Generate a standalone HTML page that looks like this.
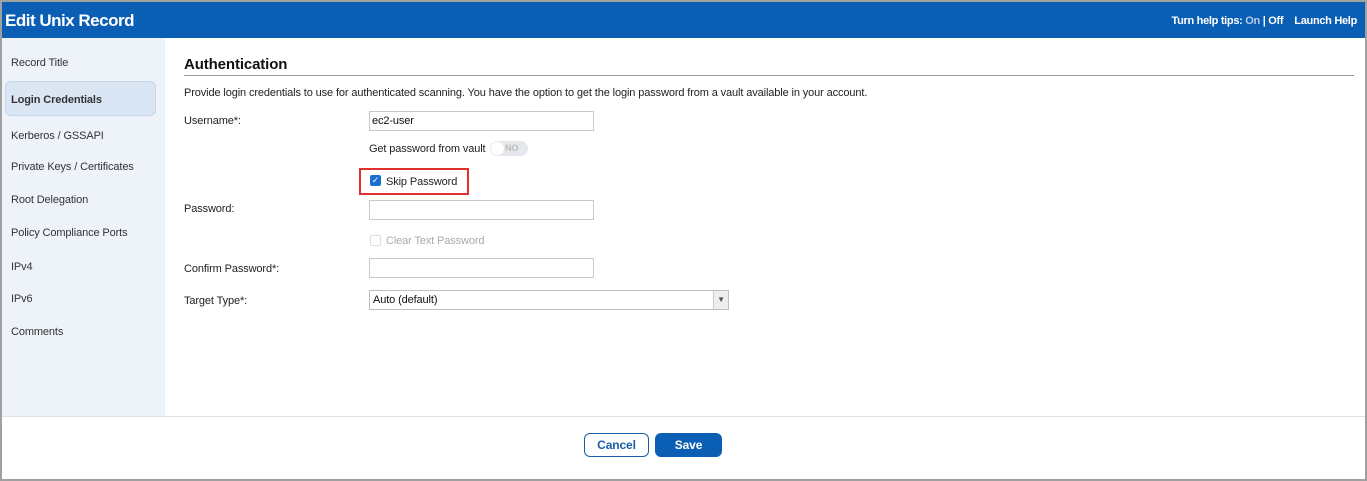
<!DOCTYPE html>
<html><head><style>
*{margin:0;padding:0;box-sizing:border-box}
body{width:1367px;height:481px;background:#a0a0a0;font-family:"Liberation Sans",Arial,sans-serif;font-size:11px;color:#222;position:relative;overflow:hidden;letter-spacing:-0.12px}
#w{position:absolute;left:2px;top:2px;width:1363px;height:477px;background:#fff}
.hd{position:absolute;left:0;top:0;width:1363px;height:36px;background:#0a5eb3;color:#fff}
.hd h1{position:absolute;left:3px;top:9px;font-size:17px;font-weight:bold;letter-spacing:-0.5px}
.hd .r{position:absolute;right:8px;top:13px;font-size:11px;font-weight:bold;letter-spacing:-0.3px}
.sb{position:absolute;left:0;top:36px;width:163px;height:378px;background:#eef3fa}
.sb div{position:absolute;left:9px;font-size:11px;color:#333}
.sel{position:absolute;left:3px;top:43px;width:151px;height:35px;background:#dae6f4;border:1px solid #c5d6ea;border-radius:6px}
.a{position:absolute;font-size:11px}
.in{position:absolute;left:367px;width:225px;height:20px;border:1px solid #c8c8c8;background:#fff}
.ft{position:absolute;left:0;top:414px;width:1363px;height:1px;background:#e0e0e0}
.btn{position:absolute;top:431px;height:24px;border-radius:6px;font-size:12px;font-weight:bold;text-align:center;line-height:22px}
</style></head><body><div id="w">
<div class="hd"><h1>Edit Unix Record</h1><div class="r">Turn help tips: <span style="color:#b8cce6">On</span> | Off &nbsp;&nbsp; Launch Help</div></div>
<div class="sb">
<div class="sel" style="left:3px;top:43px"></div>
<div style="top:19px">Record Title</div>
<div style="top:56px;font-weight:bold">Login Credentials</div>
<div style="top:92px">Kerberos / GSSAPI</div>
<div style="top:123px">Private Keys / Certificates</div>
<div style="top:156px">Root Delegation</div>
<div style="top:189px">Policy Compliance Ports</div>
<div style="top:223px">IPv4</div>
<div style="top:255px">IPv6</div>
<div style="top:288px">Comments</div>
</div>
<div class="a" style="left:182px;top:54px;font-size:15px;font-weight:bold;color:#111">Authentication</div>
<div style="position:absolute;left:182px;top:73px;width:1170px;height:1px;background:#999"></div>
<div class="a" style="left:182px;top:85px">Provide login credentials to use for authenticated scanning. You have the option to get the login password from a vault available in your account.</div>
<div class="a" style="left:182px;top:113px">Username*:</div>
<div class="in" style="top:109px;padding:3px 2px;font-size:11px;color:#111">ec2-user</div>
<div class="a" style="left:367px;top:141px">Get password from vault</div>
<div style="position:absolute;left:488px;top:139px;width:38px;height:15px;border-radius:8px;background:#e4e8ec"><div style="position:absolute;left:1px;top:1px;width:13px;height:13px;border-radius:50%;background:#fff"></div><span style="position:absolute;left:15px;top:2px;font-size:9px;font-weight:bold;color:#bbb">NO</span></div>
<div style="position:absolute;left:357px;top:166px;width:110px;height:27px;border:2px solid #e03030"></div>
<div style="position:absolute;left:368px;top:173px;width:11px;height:11px;background:#1a6fd0;border-radius:2px;color:#fff;font-size:9px;line-height:11px;text-align:center">✓</div>
<div class="a" style="left:384px;top:174px">Skip Password</div>
<div class="a" style="left:182px;top:201px">Password:</div>
<div class="in" style="top:198px"></div>
<div style="position:absolute;left:368px;top:233px;width:11px;height:11px;border:1px solid #ddd;border-radius:2px"></div>
<div class="a" style="left:384px;top:233px;color:#aaa">Clear Text Password</div>
<div class="a" style="left:182px;top:261px">Confirm Password*:</div>
<div class="in" style="top:256px"></div>
<div class="a" style="left:182px;top:293px">Target Type*:</div>
<div style="position:absolute;left:367px;top:288px;width:360px;height:20px;border:1px solid #c0c0c0;padding:3px 3px;color:#111">Auto (default)<div style="position:absolute;right:0;top:0;width:15px;height:18px;background:#eee;border-left:1px solid #ccc;font-size:8px;text-align:center;line-height:18px;color:#555">▼</div></div>
<div class="ft"></div>
<div class="btn" style="left:582px;width:65px;border:1px solid #1a5ea8;color:#1a5ea8;background:#fff">Cancel</div>
<div class="btn" style="left:653px;width:67px;background:#0a5eb3;color:#fff;line-height:24px">Save</div>
</div></body></html>
